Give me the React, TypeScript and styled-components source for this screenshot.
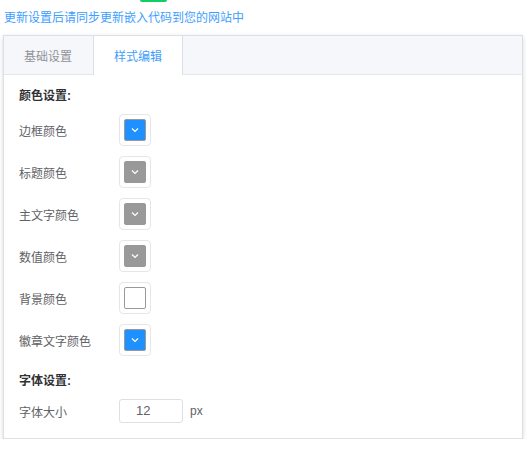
import React from "react";
import styled, { createGlobalStyle } from "styled-components";

const Global = createGlobalStyle`
  html, body { margin: 0; padding: 0; background: #fff; }
  body { font-family: "Liberation Sans", "Noto Sans CJK SC", sans-serif; font-size: 12px; color: #606266; }
  * { box-sizing: border-box; }
`;

const Page = styled.div`
  padding: 0 9px 0 3px;
  width: 531px;
`;

const GreenBar = styled.div`
  width: 27px;
  height: 2px;
  margin-left: 137px;
  background: #13ce66;
  border-radius: 0 0 3px 3px;
`;

const Notice = styled.div`
  margin: 6px 0 0 1px;
  line-height: 20px;
  font-size: 12px;
  color: #409eff;
`;

const Card = styled.div`
  margin-top: 7px;
  width: 520px;
  border: 1px solid #dcdfe6;
  background: #fff;
  box-shadow: 0 2px 4px 0 rgba(0, 0, 0, 0.12), 0 0 6px 0 rgba(0, 0, 0, 0.04);
`;

const Header = styled.div`
  display: flex;
  height: 39px;
  background: #f5f7fa;
  border-bottom: 1px solid #e4e7ed;
`;

const Tab = styled.div<{ $active?: boolean }>`
  height: ${(p) => (p.$active ? "39px" : "38px")};
  margin-bottom: ${(p) => (p.$active ? "-1px" : "0")};
  padding: 0 20px;
  line-height: 43px;
  overflow: hidden;
  font-size: 12px;
  color: ${(p) => (p.$active ? "#409eff" : "#909399")};
  background: ${(p) => (p.$active ? "#fff" : "transparent")};
  border-left: 1px solid ${(p) => (p.$active ? "#dcdfe6" : "transparent")};
  border-right: 1px solid ${(p) => (p.$active ? "#dcdfe6" : "transparent")};
  position: relative;
  z-index: 1;
  &:first-child {
    border-left: none;
  }
`;

const Body = styled.div`
  padding: 11px 15px 15px 15px;
`;

const SectionTitle = styled.div<{ $gapTop?: number }>`
  margin-top: ${(p) => p.$gapTop ?? 0}px;
  margin-bottom: 8px;
  line-height: 20px;
  font-size: 12px;
  font-weight: bold;
  color: #303133;
`;

const Row = styled.div<{ $h: number; $last?: boolean }>`
  display: flex;
  align-items: center;
  height: ${(p) => p.$h}px;
  margin-bottom: ${(p) => (p.$last ? 0 : 10)}px;
`;

const Label = styled.div`
  width: 100px;
  font-size: 12px;
  color: #606266;
`;

const Trigger = styled.div`
  width: 32px;
  height: 32px;
  padding: 4px;
  border: 1px solid #e6e6e6;
  border-radius: 4px;
`;

const Swatch = styled.div<{ $color: string }>`
  width: 100%;
  height: 100%;
  border: 1px solid #999;
  border-radius: 2px;
  background: ${(p) => p.$color};
  display: flex;
  align-items: center;
  justify-content: center;
`;

const NumInput = styled.div`
  width: 64px;
  height: 24px;
  border: 1px solid #dcdfe6;
  border-radius: 3px;
  padding-left: 16px;
  line-height: 22px;
  font-size: 13px;
  color: #606266;
  font-family: "Liberation Sans", sans-serif;
`;

const Unit = styled.span`
  margin-left: 7px;
  font-size: 12px;
  color: #606266;
  font-family: "Liberation Sans", sans-serif;
`;

const Arrow = () => (
  <svg width="10" height="10" viewBox="0 0 10 10">
    <path d="M2 3.5 L5 6.5 L8 3.5" fill="none" stroke="#fff" strokeWidth="1.2" />
  </svg>
);

const colors = [
  { label: "边框颜色", color: "#1e90ff" },
  { label: "标题颜色", color: "#999999" },
  { label: "主文字颜色", color: "#999999" },
  { label: "数值颜色", color: "#999999" },
  { label: "背景颜色", color: "#ffffff" },
  { label: "徽章文字颜色", color: "#1e90ff" },
];

export default function App() {
  return (
    <Page>
      <Global />
      <GreenBar />
      <Notice>更新设置后请同步更新嵌入代码到您的网站中</Notice>
      <Card>
        <Header>
          <Tab>基础设置</Tab>
          <Tab $active>样式编辑</Tab>
        </Header>
        <Body>
          <SectionTitle>颜色设置:</SectionTitle>
          {colors.map((c, i) => (
            <Row key={c.label} $h={32} $last={i === colors.length - 1}>
              <Label>{c.label}</Label>
              <Trigger>
                <Swatch $color={c.color}>{c.color !== "#ffffff" && <Arrow />}</Swatch>
              </Trigger>
            </Row>
          ))}
          <SectionTitle $gapTop={15}>字体设置:</SectionTitle>
          <Row $h={24} $last>
            <Label>字体大小</Label>
            <NumInput>12</NumInput>
            <Unit>px</Unit>
          </Row>
        </Body>
      </Card>
    </Page>
  );
}
